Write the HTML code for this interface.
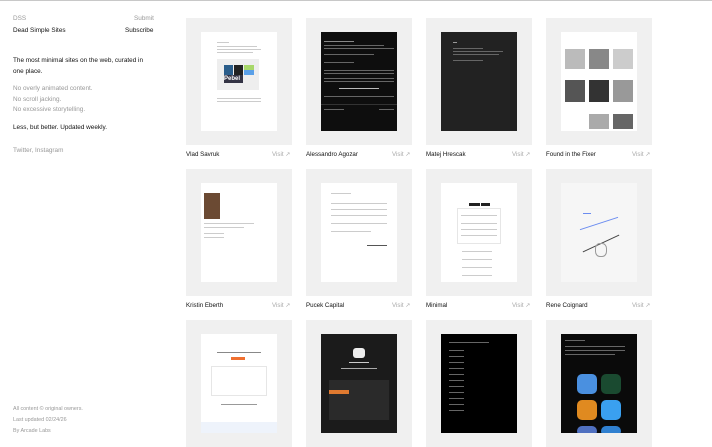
<!DOCTYPE html>
<html><head><style>
*{margin:0;padding:0;box-sizing:border-box}
body{width:712px;height:446px;overflow:hidden;background:#fff;font-family:"Liberation Sans",sans-serif;position:relative;border-top:1px solid #c8c8c8}
.t{position:absolute;font-size:6.4px;line-height:9px;white-space:nowrap}
.g{color:#999}.k{color:#111}
.card{position:absolute;width:106px;height:127px;background:#f0f0f0}
.in{position:absolute;left:15px;top:14px;width:76px;height:99px;background:#fff;overflow:hidden}
.lab{position:absolute;font-size:6.2px;color:#111;white-space:nowrap}
.visit{position:absolute;font-size:6.2px;color:#aaa;white-space:nowrap}
.ln{position:absolute;height:1px;background:#ccc}
.dl{position:absolute;height:1px;background:#666}
</style></head><body>
<div class="t g" style="left:13px;top:13px">DSS</div>
<div class="t g" style="left:134px;top:13px">Submit</div>
<div class="t k" style="left:13px;top:25px">Dead Simple Sites</div>
<div class="t k" style="left:125px;top:25px">Subscribe</div>
<div class="t k" style="left:13px;top:55px">The most minimal sites on the web, curated in</div>
<div class="t k" style="left:13px;top:66px">one place.</div>
<div class="t g" style="left:13px;top:83px">No overly animated content.</div>
<div class="t g" style="left:13px;top:94px">No scroll jacking.</div>
<div class="t g" style="left:13px;top:104px">No excessive storytelling.</div>
<div class="t k" style="left:13px;top:122px">Less, but better. Updated weekly.</div>
<div class="t g" style="left:13px;top:145px">Twitter, Instagram</div>
<div class="t g" style="left:13px;top:404px;font-size:5.4px">All content © original owners.</div>
<div class="t g" style="left:13px;top:415px;font-size:5.4px">Last updated 02/24/26</div>
<div class="t g" style="left:13px;top:426px;font-size:5.4px">By Arcade Labs</div>

<!-- row1 -->
<div class="card" style="left:186px;top:17px"><div class="in">
<div class="ln" style="left:16px;top:10px;width:12px"></div>
<div class="ln" style="left:16px;top:14px;width:40px"></div><div class="ln" style="left:16px;top:17px;width:44px"></div><div class="ln" style="left:16px;top:20px;width:36px"></div>
<div style="position:absolute;left:16px;top:27px;width:42px;height:31px;background:#eee"></div>
<div style="position:absolute;left:23px;top:33px;width:9px;height:10px;background:#2a5d8a"></div>
<div style="position:absolute;left:33px;top:33px;width:9px;height:10px;background:#222"></div>
<div style="position:absolute;left:43px;top:33px;width:10px;height:5px;background:#a8d86a"></div>
<div style="position:absolute;left:43px;top:38px;width:10px;height:5px;background:#5aa0e8"></div>
<div style="position:absolute;left:23px;top:43px;width:19px;height:8px;background:#334;color:#fff;font-size:6px;line-height:8px;font-weight:bold">Pebel</div>
<div class="ln" style="left:16px;top:66px;width:44px"></div><div class="ln" style="left:16px;top:69px;width:44px"></div>
</div></div>
<div class="lab" style="left:186px;top:150px">Vlad Savruk</div><div class="visit" style="left:272px;top:150px">Visit ↗</div>

<div class="card" style="left:306px;top:17px"><div class="in" style="background:#0e0e0e;width:76px">
<div class="dl" style="left:3px;top:9px;width:30px;background:#888"></div>
<div class="dl" style="left:3px;top:13px;width:60px"></div><div class="dl" style="left:3px;top:16px;width:70px"></div>
<div class="dl" style="left:3px;top:22px;width:50px"></div><div class="dl" style="left:3px;top:30px;width:30px"></div>
<div class="dl" style="left:3px;top:38px;width:70px"></div><div class="dl" style="left:3px;top:41px;width:70px"></div>
<div class="dl" style="left:3px;top:46px;width:70px"></div><div class="dl" style="left:3px;top:49px;width:70px"></div>
<div class="dl" style="left:18px;top:56px;width:40px;background:#bbb"></div>
<div class="dl" style="left:3px;top:64px;width:70px"></div>
<div class="dl" style="left:0px;top:72px;width:76px;background:#333"></div>
<div class="dl" style="left:3px;top:77px;width:20px"></div><div class="dl" style="left:58px;top:77px;width:15px"></div>
</div></div>
<div class="lab" style="left:306px;top:150px">Alessandro Agozar</div><div class="visit" style="left:392px;top:150px">Visit ↗</div>

<div class="card" style="left:426px;top:17px"><div class="in" style="background:#222">
<div class="dl" style="left:12px;top:10px;width:4px;background:#999"></div>
<div class="dl" style="left:12px;top:16px;width:30px"></div><div class="dl" style="left:12px;top:19px;width:50px"></div>
<div class="dl" style="left:12px;top:22px;width:46px"></div><div class="dl" style="left:12px;top:28px;width:30px"></div>
</div></div>
<div class="lab" style="left:426px;top:150px">Matej Hrescak</div><div class="visit" style="left:512px;top:150px">Visit ↗</div>

<div class="card" style="left:546px;top:17px"><div class="in">
<div style="position:absolute;left:4px;top:17px;width:20px;height:20px;background:#bbb"></div>
<div style="position:absolute;left:28px;top:17px;width:20px;height:20px;background:#888"></div>
<div style="position:absolute;left:52px;top:17px;width:20px;height:20px;background:#ccc"></div>
<div style="position:absolute;left:4px;top:48px;width:20px;height:22px;background:#555"></div>
<div style="position:absolute;left:28px;top:48px;width:20px;height:22px;background:#333"></div>
<div style="position:absolute;left:52px;top:48px;width:20px;height:22px;background:#999"></div>
<div style="position:absolute;left:28px;top:82px;width:20px;height:15px;background:#aaa"></div>
<div style="position:absolute;left:52px;top:82px;width:20px;height:15px;background:#666"></div>
</div></div>
<div class="lab" style="left:546px;top:150px">Found in the Fixer</div><div class="visit" style="left:632px;top:150px">Visit ↗</div>

<!-- row2 -->
<div class="card" style="left:186px;top:168px"><div class="in">
<div style="position:absolute;left:3px;top:10px;width:16px;height:26px;background:#6b4a33"></div>
<div class="ln" style="left:3px;top:40px;width:50px"></div><div class="ln" style="left:3px;top:44px;width:40px"></div>
<div class="ln" style="left:3px;top:50px;width:20px"></div><div class="ln" style="left:3px;top:54px;width:20px"></div>
</div></div>
<div class="lab" style="left:186px;top:301px">Kristin Eberth</div><div class="visit" style="left:272px;top:301px">Visit ↗</div>

<div class="card" style="left:306px;top:168px"><div class="in">
<div class="ln" style="left:10px;top:10px;width:20px"></div>
<div class="ln" style="left:10px;top:20px;width:56px"></div><div class="ln" style="left:10px;top:26px;width:56px"></div>
<div class="ln" style="left:10px;top:32px;width:56px"></div><div class="ln" style="left:10px;top:40px;width:56px"></div>
<div class="ln" style="left:10px;top:48px;width:40px"></div><div class="ln" style="left:46px;top:62px;width:20px;background:#555"></div>
</div></div>
<div class="lab" style="left:306px;top:301px">Pucek Capital</div><div class="visit" style="left:392px;top:301px">Visit ↗</div>

<div class="card" style="left:426px;top:168px"><div class="in">
<div style="position:absolute;left:28px;top:20px;width:11px;height:3px;background:#222"></div>
<div style="position:absolute;left:40px;top:20px;width:9px;height:3px;background:#222"></div>
<div style="position:absolute;left:16px;top:25px;width:44px;height:36px;border:1px solid #e6e6e6"></div>
<div class="ln" style="left:20px;top:32px;width:36px"></div><div class="ln" style="left:20px;top:40px;width:36px"></div><div class="ln" style="left:20px;top:46px;width:36px"></div><div class="ln" style="left:20px;top:52px;width:36px"></div>
<div class="ln" style="left:21px;top:68px;width:30px"></div><div class="ln" style="left:21px;top:76px;width:30px"></div><div class="ln" style="left:21px;top:84px;width:30px"></div><div class="ln" style="left:21px;top:92px;width:30px"></div>
</div></div>
<div class="lab" style="left:426px;top:301px">Minimal</div><div class="visit" style="left:512px;top:301px">Visit ↗</div>

<div class="card" style="left:546px;top:168px"><div class="in" style="background:#f6f6f6">
<div style="position:absolute;left:18px;top:40px;width:40px;height:1px;background:#6b8cf0;transform:rotate(-18deg)"></div>
<div style="position:absolute;left:22px;top:30px;width:8px;height:1px;background:#6b8cf0"></div>
<div style="position:absolute;left:20px;top:60px;width:40px;height:1px;background:#444;transform:rotate(-25deg)"></div>
<div style="position:absolute;left:34px;top:60px;width:12px;height:14px;border:1px solid #999;border-radius:40%"></div>
</div></div>
<div class="lab" style="left:546px;top:301px">Rene Coignard</div><div class="visit" style="left:632px;top:301px">Visit ↗</div>

<!-- row3 -->
<div class="card" style="left:186px;top:319px;height:127px"><div class="in">
<div class="ln" style="left:16px;top:18px;width:44px;background:#888"></div>
<div style="position:absolute;left:30px;top:23px;width:14px;height:3px;background:#f07030"></div>
<div style="position:absolute;left:10px;top:32px;width:56px;height:30px;border:1px solid #e6e6e6"></div>
<div class="ln" style="left:20px;top:70px;width:36px;background:#999"></div>
<div style="position:absolute;left:0;top:88px;width:76px;height:11px;background:#eef3fb"></div>
</div></div>
<div class="card" style="left:306px;top:319px;height:127px"><div class="in" style="background:#1b1b1b">
<div style="position:absolute;left:32px;top:14px;width:12px;height:10px;background:#eee;border-radius:3px"></div>
<div class="dl" style="left:28px;top:28px;width:20px;background:#ccc"></div>
<div class="dl" style="left:20px;top:34px;width:36px;background:#aaa"></div>
<div style="position:absolute;left:8px;top:46px;width:60px;height:40px;background:#2a2a2a"></div>
<div style="position:absolute;left:8px;top:56px;width:20px;height:4px;background:#e07a30"></div>
</div></div>
<div class="card" style="left:426px;top:319px;height:127px"><div class="in" style="background:#000">
<div class="dl" style="left:8px;top:8px;width:40px"></div>
<div class="dl" style="left:8px;top:16px;width:15px"></div><div class="dl" style="left:8px;top:22px;width:15px"></div><div class="dl" style="left:8px;top:28px;width:15px"></div><div class="dl" style="left:8px;top:34px;width:15px"></div><div class="dl" style="left:8px;top:40px;width:15px"></div><div class="dl" style="left:8px;top:46px;width:15px"></div><div class="dl" style="left:8px;top:52px;width:15px"></div><div class="dl" style="left:8px;top:58px;width:15px"></div><div class="dl" style="left:8px;top:64px;width:15px"></div><div class="dl" style="left:8px;top:70px;width:15px"></div><div class="dl" style="left:8px;top:76px;width:15px"></div>
</div></div>
<div class="card" style="left:546px;top:319px;height:127px"><div class="in" style="background:#0a0a0a">
<div class="dl" style="left:4px;top:6px;width:20px"></div><div class="dl" style="left:4px;top:12px;width:60px"></div><div class="dl" style="left:4px;top:16px;width:60px"></div><div class="dl" style="left:4px;top:20px;width:50px"></div>
<div style="position:absolute;left:16px;top:40px;width:20px;height:20px;background:#4a90e0;border-radius:5px"></div>
<div style="position:absolute;left:40px;top:40px;width:20px;height:20px;background:#1a4a30;border-radius:5px"></div>
<div style="position:absolute;left:16px;top:66px;width:20px;height:20px;background:#e08a20;border-radius:5px"></div>
<div style="position:absolute;left:40px;top:66px;width:20px;height:20px;background:#3aa0f0;border-radius:5px"></div>
<div style="position:absolute;left:16px;top:92px;width:20px;height:10px;background:#5070c0;border-radius:5px"></div>
<div style="position:absolute;left:40px;top:92px;width:20px;height:10px;background:#3080d0;border-radius:5px"></div>
</div></div>
</body></html>
